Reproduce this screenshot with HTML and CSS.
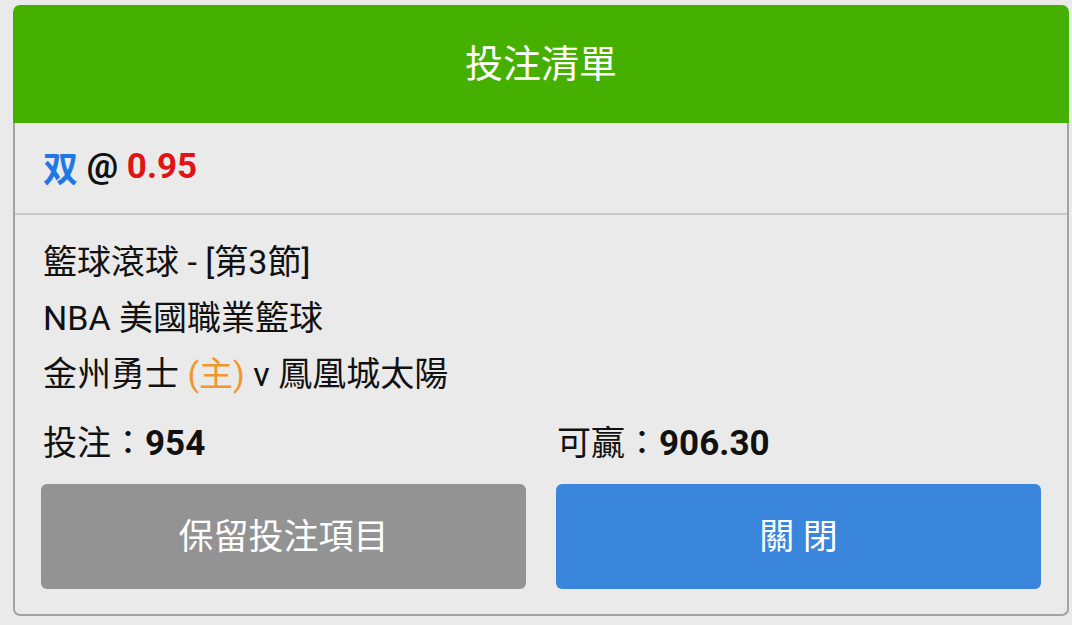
FILE: index.html
```html
<!DOCTYPE html>
<html lang="zh-Hant">
<head>
    <meta charset="UTF-8">
    <meta name="viewport" content="width=device-width, initial-scale=1.0">
    <title>投注清單</title>
    <link rel="stylesheet" href="styles.css">
</head>
<body>

<div class="betslip">
    <header class="betslip-header">投注清單</header>

    <div class="betslip-content">
        <div class="selection">
            <span class="pick">双</span> @ <span class="odds">0.95</span>
        </div>

        <div class="details">
            <p>籃球滾球 - [第3節]</p>
            <p>NBA 美國職業籃球</p>
            <p>金州勇士 <span class="home">(主)</span> v 鳳凰城太陽</p>

            <div class="totals">
                <div>投注：<b>954</b></div>
                <div>可贏：<b>906.30</b></div>
            </div>

            <div class="actions">
                <button class="btn btn-keep">保留投注項目</button>
                <button class="btn btn-close">關 閉</button>
            </div>
        </div>
    </div>
</div>

</body>
</html>
```

FILE: styles.css
```css
body {
    margin: 0;
    background-color: #eaeaea;
    font-family: Roboto, "Noto Sans CJK TC", sans-serif;
    color: #111;
}

.betslip {
    margin: 5px 3px 0 13px;
}

.betslip-header {
    height: 118px;
    box-sizing: border-box;
    padding-bottom: 8px;
    background-color: #46b000;
    border-radius: 7px 7px 0 0;
    color: #fff;
    font-size: 38px;
    display: flex;
    align-items: center;
    justify-content: center;
}

.betslip-content {
    border: 2px solid #a3a3a3;
    border-top: none;
    border-radius: 0 0 7px 7px;
    background-color: #eaeaea;
}

.selection {
    height: 92px;
    display: flex;
    align-items: center;
    white-space: pre;
    padding: 0 0 4px 28px;
    box-sizing: border-box;
    font-size: 35px;
    font-weight: bold;
    border-bottom: 2px solid #c9c9c9;
}

.pick {
    color: #1f78e6;
}

.odds {
    color: #e01414;
}

.details {
    padding: 19px 26px 25px 26px;
}

.details p {
    margin: 0;
    padding-left: 2px;
    font-size: 34px;
    line-height: 56px;
}

.home {
    color: #f0962e;
}

.totals {
    display: grid;
    grid-template-columns: 1fr 1fr;
    column-gap: 30px;
    margin-top: 13px;
    font-size: 34px;
    line-height: 56px;
    padding-left: 2px;
}

.totals b {
    font-size: 35px;
}

.actions {
    display: grid;
    grid-template-columns: 1fr 1fr;
    column-gap: 30px;
    margin-top: 12px;
}

.btn {
    height: 105px;
    border: none;
    border-radius: 6px;
    color: #fff;
    font-family: inherit;
    font-size: 35px;
    padding-bottom: 8px;
    cursor: pointer;
}

.btn-keep {
    background-color: #939393;
}

.btn-close {
    background-color: #3a86dc;
}
```
